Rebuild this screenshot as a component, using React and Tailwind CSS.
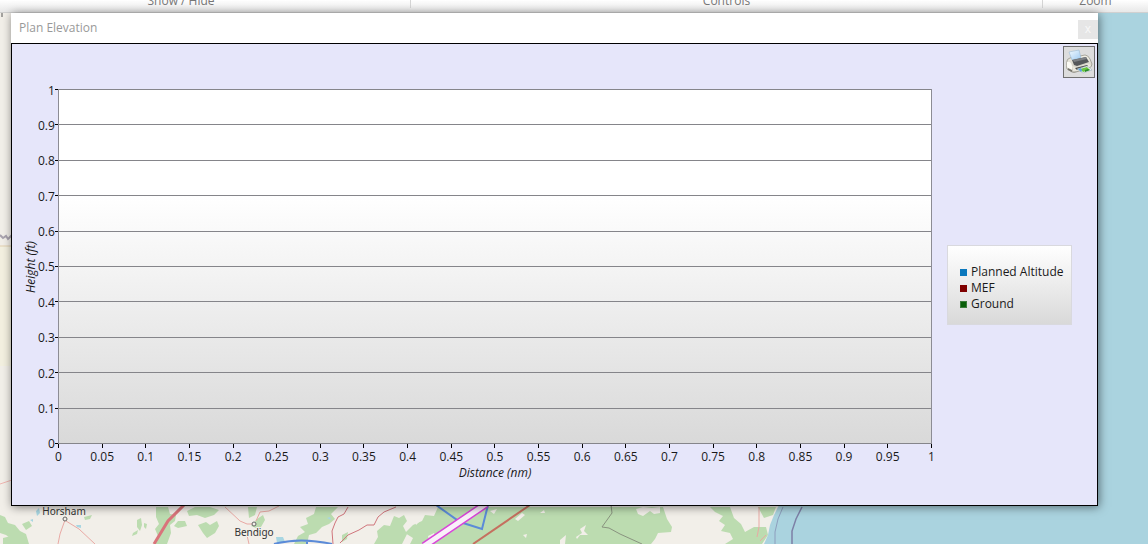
import React from "react";

const Y_TICKS = ["1", "0.9", "0.8", "0.7", "0.6", "0.5", "0.4", "0.3", "0.2", "0.1", "0"];
const X_TICKS = [
  "0", "0.05", "0.1", "0.15", "0.2", "0.25", "0.3", "0.35", "0.4", "0.45", "0.5",
  "0.55", "0.6", "0.65", "0.7", "0.75", "0.8", "0.85", "0.9", "0.95", "1",
];

const SERIES = [
  { name: "Planned Altitude", swatch: "bg-[#0b78bd] border-[#0b78bd]" },
  { name: "MEF", swatch: "bg-[#7f0000] border-[#7f0000]" },
  { name: "Ground", swatch: "bg-[#0a5f0a] border-[#3b7d3b]" },
];

const MapBackground = () => (
  <svg
    className="absolute inset-0 w-full h-full"
    viewBox="0 0 1148 544"
    preserveAspectRatio="xMinYMin slice"
    aria-hidden="true"
  >
    <rect width="1148" height="544" fill="#f2efe9" />
    {/* left strip */}
    <rect y="246" width="12" height="120" fill="#f3f0e0" />
    <path d="M0 246h12" stroke="#e2cfae" strokeWidth="1" />
    <path d="M2 13v4" stroke="#555" strokeWidth="1" />
    <path d="M0 235l3 3 3-2 2 3 4-4" stroke="#a9a3ae" strokeWidth="2" fill="none" />
    <path d="M0 484l12-4" stroke="#efb5b0" strokeWidth="1" />
    {/* forests */}
    <g fill="#bcdcb0">
      <path d="M0 515l5 2 3 6 7 2 5 6 6 3 3 10H12l-2-6-4-3-6-2z" />
      <path d="M3 538l8-2 6 5-4 3H3z M22 524l7-3 3 5-6 4z M84 517l8-2-2 4-5 1z" />
      <path d="M137 520l4-2 1 7-2 6-3-4z M133 533l5-3-1 4-5 2z M144 523l3 1-1 5-2-2z" />
      <path d="M156 507h12l2 7 6 1-1 6-5 4 1 8-4 11h-12l3-8-3-7 4-5-3-7z" />
      <path d="M187 511l8-4h15l9 3-5 5-9 3-8-3-8 1z M178 521l7 0 2 5-9 2-4-2z M198 525l8-3 4 3 7-4 2 5-4 7-8 5-4-5z M248 507h9l-2 8-6 3z M257 519l6-4 2 5-4 7-5 1-5-2z" />
      <path d="M316 507h22l-7 7 4 5-6 5-7 3-6 6-7 2-2 9h-13l4-8 7-4-5-5 8-3-2-6 8-4z" />
      <path d="M342 535l6-3-1 7-5 3z M377 531l7-6 6 1 4-10 5 2 5-3 3 6-4 5 4 8-5 10h-28l4-7z" />
      <path d="M405 533l8-8 9-4 3-6 9 1 4-9h225l4 12 5 8-1 5-13 1-3 6-4 5H410l3-6z" />
      <path d="M710 507h20l4 11 7 6 4 8 9-5 12 0 2 8-6 9h-37l8-5-3-6-9-2 4-6-6-4 4-5-8-4z" />
      <path d="M758 507l18-0-3 8-9 3z" />
    </g>
    <g fill="#f2efe9">
      <path d="M413 517l6-3 3 5-6 6z M636 509l7-2 9 1 8-1 0 6-6 1-4-3-7 5-5-2z M576 537l6-4-2-4 6-4-2 6 4 4-8 0-3 4z M560 540l6-5-1 9h-5z M515 519l7-6 3 2-7 6z M523 535l4-1-1 4z M490 511l7-2-3 5z M428 536l6-3 2 6-6 5z" />
      <path d="M447 529l4-3 3 4-4 3z M540 513l4-3 1 3z" />
    </g>
    <g fill="#a8d6e2">
      <path d="M36 511l3-3 1 5-3 3z M30 520l3-1v3z M76 525l5 0 0 3-4-1z M276 537l7 0 2 5-8 1z M327 518l3-1 1 3z" />
    </g>
    {/* sea */}
    <path d="M1098 12h50v532H764l4-9 2-10 4-10 5-10h319z" fill="#aad3df" />
    <path d="M783 507l-5 12-3 13 0 12" stroke="#8d9ebd" strokeWidth="1" fill="none" />
    <path d="M802 507l-6 12-4 12 0 13" stroke="#7d80a6" strokeWidth="1.5" fill="none" />
    {/* roads */}
    <g fill="none" stroke="#e9a9a4" strokeWidth="1">
      <path d="M65 520l-5 14-2 10 M66 521l13 8 16 15 M225 507l15 14 7 3 6 0 M256 521l4-9 9-1 10-5 M246 531l3 13" />
      <path d="M759 507l0 20-2 10 M766 535l-6 6" />
    </g>
    <g fill="none" stroke="#d0757c" strokeWidth="1">
      <path d="M348 507l-4 7-6 3-3 6-3 8 1 13 M396 507l-12 5-6 5-4 8-7 0-8 5-11 5-8 8" />
    </g>
    <path d="M185 504l-17 17-14 23" stroke="#d9747b" strokeWidth="3" fill="none" />
    <path d="M530 505l-57 39" stroke="#c5705f" strokeWidth="2" fill="none" />
    <path d="M611 505l1 8-10 14 7 1 11 6 22 10" stroke="#89937f" strokeWidth="1" fill="none" />
    {/* airspace boundaries */}
    <path d="M274 544q26-7 58 0 M307 540v4 M436 505l24 17 22 7 6-24" stroke="#5b8bd8" strokeWidth="2" fill="none" />
    {/* flight plan leg */}
    <path d="M486 504l-62 42" stroke="#d944d9" strokeWidth="8" />
    <path d="M486 504l-62 42" stroke="#faf0fa" strokeWidth="5" />
    {/* towns */}
    <g fill="#f2efe9" stroke="#666" strokeWidth="1">
      <circle cx="65" cy="519" r="2" />
      <circle cx="254" cy="524" r="2" />
    </g>
    <g
      className="font-['Noto_Sans',sans-serif] text-[10px]"
      fill="#333"
      stroke="#f2efe9"
      strokeWidth="2"
      paintOrder="stroke"
      textAnchor="middle"
    >
      <text x="64" y="515">Horsham</text>
      <text x="254" y="536">Bendigo</text>
    </g>
  </svg>
);

const PrinterIcon = () => (
  <svg className="w-7 h-7" viewBox="0 0 28 28" aria-hidden="true">
    <defs>
      <linearGradient id="paper" x1="0" y1="0" x2="1" y2="1">
        <stop offset="0" stopColor="#f3faff" />
        <stop offset="1" stopColor="#9fcbf3" />
      </linearGradient>
      <linearGradient id="shell" x1="0" y1="0" x2="0" y2="1">
        <stop offset="0" stopColor="#f4f2e8" />
        <stop offset="1" stopColor="#c3c1b6" />
      </linearGradient>
    </defs>
    {/* shell */}
    <path d="M2 13q0-2 3-3l15-3q3 0 5 4l2 5q0 3-3 4l-13 4q-2 1-4 0l-5-3q-1-4 0-8z" fill="url(#shell)" stroke="#8b897e" strokeWidth=".7" />
    <path d="M2 14q4-1 5 4l0 5-4-2q-2-3-1-7z" fill="#fbfaf4" />
    <path d="M7 18l4 1 13-3 2 1-1 2-13 4-4 0z" fill="#e9e7dd" />
    {/* input sheet */}
    <path d="M4 4l10-2 2 8-9 2z" fill="url(#paper)" stroke="#8fb2d1" strokeWidth=".5" />
    {/* lid */}
    <path d="M7 12l14-3 3 5-12 4-3-1z" fill="#55585b" />
    <path d="M8 12l13-3 1 2-13 3z" fill="#7d8185" />
    <path d="M3 20l4 2 0 2-4-2z" fill="#77766d" />
    <path d="M10 20l12-3 1 1-11 4z" fill="#4a4a48" />
    {/* printed sheet */}
    <path d="M12 21l10-3 5 4-9 3z" fill="#f1f8fb" stroke="#93a9b5" strokeWidth=".5" />
    <path d="M15 21l7-2 3 3-7 2z" fill="#6cc540" />
    <path d="M13 21l3-1 1 3-1 1z" fill="#5aa2dc" />
    <path d="M20 22l3-1 2 1-5 2z" fill="#278a2b" />
  </svg>
);

const Ribbon = () => (
  <div className="relative flex h-[13px] overflow-hidden border-b border-[#d0d0d0] bg-linear-to-b from-white to-[#e8e8e8] text-xs leading-4 text-[#777] text-center">
    <div className="w-[410px] pr-12">
      <div className="-mt-[7px]">Show / Hide</div>
    </div>
    <div className="flex-1 border-x border-[#d5d5d5] h-2">
      <div className="-mt-[7px]">Controls</div>
    </div>
    <div className="w-[105px]">
      <div className="-mt-[7px]">Zoom</div>
    </div>
  </div>
);

const Legend = () => (
  <ul className="ml-[15px] mr-[25px] w-[125px] shrink-0 self-center border border-[#d9d9de] bg-linear-to-b from-white to-[#d9d9d9] pt-[18px] pb-3 pl-3 text-xs leading-4">
    {SERIES.map((s) => (
      <li key={s.name} className="flex items-center gap-1 whitespace-nowrap">
        <span className={`w-[7px] h-[7px] border ${s.swatch}`} />
        {s.name}
      </li>
    ))}
  </ul>
);

const ElevationChart = () => (
  <div className="flex pl-3 text-xs leading-4 text-[#1a1a1a]">
    <div className="flex h-[355px] w-[34px] shrink-0">
      <div className="flex w-[14px] shrink-0 items-center justify-center">
        <span className="rotate-180 italic whitespace-nowrap [writing-mode:vertical-rl]">Height (ft)</span>
      </div>
      <div className="flex flex-1 flex-col justify-between">
        {Y_TICKS.map((t) => (
          <div key={t} className="flex h-px items-center justify-end">
            <span className="pt-0.5">{t}</span>
            <span className="h-px w-1 shrink-0 bg-black" />
          </div>
        ))}
      </div>
    </div>

    <div className="min-w-0 flex-1">
      <div className="flex h-[355px] flex-col justify-between border-x border-[#8c8c94] bg-linear-to-b from-white from-30% to-[#d9d9d9]">
        {Y_TICKS.map((t) => (
          <div key={t} className="h-px bg-[#85858a]" />
        ))}
      </div>
      <div className="flex justify-between">
        {X_TICKS.map((t) => (
          <div key={t} className="flex w-px flex-col items-center gap-px">
            <span className="h-1 w-px bg-black" />
            <span>{t}</span>
          </div>
        ))}
      </div>
      <div className="text-center italic">Distance (nm)</div>
    </div>

    <Legend />
  </div>
);

const App = () => {
  return (
    <div className="relative min-h-screen overflow-hidden font-['Open_Sans','Noto_Sans',sans-serif]">
      <MapBackground />
      <Ribbon />

      <section
        aria-labelledby="plan-elevation-title"
        className="relative ml-[11px] mr-[50px] bg-white shadow-[1px_1px_9px_rgba(0,0,0,0.5)]"
      >
        <header className="flex h-[30px] items-center justify-between pl-2">
          <h1 id="plan-elevation-title" className="text-xs leading-4 text-[#999]">Plan Elevation</h1>
          <button
            type="button"
            aria-label="Close"
            className="mt-0.5 flex h-[19px] w-5 items-center justify-center bg-[#e6e6e6] text-xs leading-4 text-[#f8f8f8]"
          >
            x
          </button>
        </header>

        <div className="border border-black bg-[#e6e6fa] pb-6">
          <div className="flex justify-end pt-0.5 pr-0.5 pb-[11px]">
            <button
              type="button"
              aria-label="Print"
              className="flex h-8 w-8 items-center justify-center border border-[#707070] bg-[#dddddd]"
            >
              <PrinterIcon />
            </button>
          </div>
          <ElevationChart />
        </div>
      </section>
    </div>
  );
};

export default App;
